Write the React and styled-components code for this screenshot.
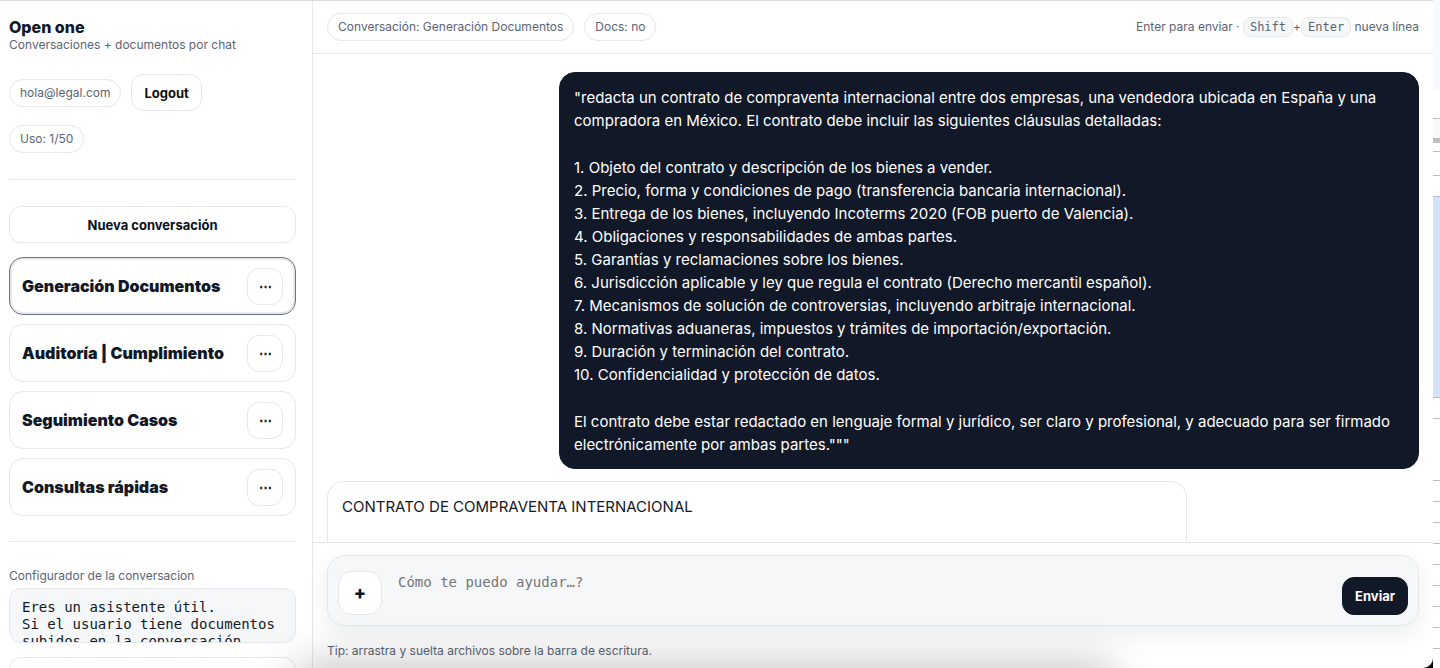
import styled, { createGlobalStyle } from "styled-components";

const GlobalStyle = createGlobalStyle`
    *{
        box-sizing: border-box;
    }
    body{
        margin: 0;
        background-color: #fff;
        color: #111827;
        font-family: Inter, "Liberation Sans", sans-serif;
        font-size: 16px;
    }
    button, textarea{
        color: inherit;
        font-size: 14px;
    }
`

const Screen = styled.div`
    height: 100vh;
    display: flex;
    position: relative;
    overflow: hidden;
    background-color: #000;
`

const Layout = styled.div`
    flex: 1;
    min-width: 0;
    display: grid;
    grid-template-columns: 313px minmax(0, 1fr);
    border-top: 1px solid #dcdcdc;
    border-bottom-right-radius: 10px;
    background-color: #fff;
`

const Sidebar = styled.aside`
    display: flex;
    flex-direction: column;
    min-height: 0;
    overflow: hidden;
    padding: 16px 16px 0 9px;
    border-right: 1px solid #e5e7eb;

    > *{
        flex-shrink: 0;
    }
`

const Brand = styled.h1`
    margin: 0;
    font-size: 16px;
    line-height: 20px;
    font-weight: 800;
`

const Muted = styled.div`
    color: #5b6475;
    font-size: 12px;
    line-height: 16px;
`

const Account = styled.div`
    display: flex;
    flex-wrap: wrap;
    align-items: center;
    gap: 14px 10px;
    margin: 21px 60px 26px 0;
`

const Pill = styled.span`
    height: 28px;
    padding: 0 10px;
    border: 1px solid #e5e7eb;
    border-radius: 14px;
    color: #5b6475;
    font-size: 12px;
    line-height: 26px;
    white-space: nowrap;
`

const Button = styled.button`
    height: 38px;
    padding: 0 12px;
    border: 1px solid ${(props) => props.$dark ? "#111827" : "#e5e7eb"};
    border-radius: 12px;
    background-color: ${(props) => props.$dark ? "#111827" : "#fff"};
    color: ${(props) => props.$dark ? "#fff" : "#0b1020"};
    font-family: Inter, "Liberation Sans", sans-serif;
    font-size: 13px;
    line-height: 16px;
    font-weight: 700;
`

const SideButton = styled(Button)`
    height: 37px;
`

const Divider = styled.hr`
    width: 100%;
    height: 1px;
    margin: 0 0 26px;
    border: 0;
    background-color: #e5e7eb;
`

const Chats = styled.ul`
    display: flex;
    flex-direction: column;
    gap: 9px;
    margin: 14px 0 25px;
    padding: 0;
    list-style: none;
`

const Chat = styled.li`
    display: flex;
    align-items: center;
    justify-content: space-between;
    height: 58px;
    padding: 0 12px;
    border: 1px solid ${(props) => props.$active ? "#6b7280" : "#e5e7eb"};
    border-radius: 14px;
    box-shadow: ${(props) => props.$active ? "inset 0 0 0 2px #e7e8ea" : "none"};
    font-weight: 900;
`

const MenuButton = styled(SideButton)`
    width: 36px;
    padding: 0;
`

const Label = styled.label`
    margin-bottom: 4px;
    color: #5b6475;
    font-size: 12px;
    line-height: 16px;
`

const Instructions = styled.textarea`
    display: block;
    width: 100%;
    height: 55px;
    padding: 10px 12px;
    border: 1px solid #e5e7eb;
    border-radius: 12px;
    background-color: #f5f7f9;
    font-family: "DejaVu Sans Mono", monospace;
    line-height: 17px;
    overflow: hidden;
    resize: none;
`

const SaveButton = styled(Button)`
    margin-top: 14px;
`

const Main = styled.main`
    display: flex;
    flex-direction: column;
    min-width: 0;
    min-height: 0;
`

const Topbar = styled.header`
    display: flex;
    align-items: center;
    gap: 10px;
    height: 53px;
    padding: 0 14px;
    border-bottom: 1px solid #e5e7eb;
`

const Hint = styled(Muted)`
    margin-left: auto;
`

const Kbd = styled.kbd`
    display: inline-block;
    padding: 0 6px;
    border: 1px solid #e5e7eb;
    border-radius: 8px;
    background-color: #f5f7f9;
    font-family: "DejaVu Sans Mono", monospace;
    font-size: 12px;
    line-height: 18px;
`

const Messages = styled.section`
    flex: 1;
    min-height: 0;
    display: flex;
    flex-direction: column;
    gap: 12px;
    padding: 18px 14px 0;
    overflow: hidden;
`

const Bubble = styled.article`
    flex-shrink: 0;
    align-self: ${(props) => props.$mine ? "flex-end" : "flex-start"};
    width: 860px;
    max-width: 92%;
    min-height: 120px;
    padding: 13px 14px 12px;
    border: 1px solid ${(props) => props.$mine ? "#111827" : "#e5e7eb"};
    border-radius: 16px;
    background-color: ${(props) => props.$mine ? "#111827" : "#fff"};
    color: ${(props) => props.$mine ? "#fff" : "#111827"};
    font-size: 15px;
    line-height: 23px;
`

const Text = styled.p`
    margin: 0 0 24px;

    &:last-child{
        margin-bottom: 0;
    }
`

const Clauses = styled.ol`
    margin: 0 0 24px;
    padding: 0;
    list-style: none;
`

const Footer = styled.footer`
    padding: 12px 14px 9px;
    border-top: 1px solid #e5e7eb;
`

const Composer = styled.form`
    display: flex;
    align-items: flex-end;
    gap: 10px;
    height: 71px;
    margin-bottom: 17px;
    padding: 10px;
    border: 1px solid #e5e7eb;
    border-radius: 18px;
    background-color: #f5f7f9;
    box-shadow: 0 8px 24px rgba(17, 24, 39, 0.08);
`

const AddButton = styled(Button)`
    width: 44px;
    height: 44px;
    padding: 0;
    border-radius: 14px;
    font-size: 18px;
    font-weight: 800;
`

const Prompt = styled.textarea`
    flex: 1;
    height: 44px;
    padding: 3px 6px;
    border: 0;
    background: none;
    font-family: "DejaVu Sans Mono", monospace;
    line-height: 17px;
    resize: none;

    &::placeholder{
        color: #757575;
    }
`

const Strip = styled.div`
    width: 7px;
    flex-shrink: 0;
    background-color: #fff;
`

const Cell = styled.div`
    height: ${(props) => props.$height}px;
    border-bottom: ${(props) => props.$line}px solid #bfbfbf;
    background-color: ${(props) => props.$color};
`

const Shade = styled.div`
    position: absolute;
    left: 310px;
    right: 340px;
    bottom: -38px;
    height: 30px;
    box-shadow: 0 0 44px 12px rgba(0, 0, 0, 0.24);
    pointer-events: none;
`

const chats = ["Generación Documentos", "Auditoría | Cumplimiento", "Seguimiento Casos", "Consultas rápidas"]

const clauses = [
    "Objeto del contrato y descripción de los bienes a vender.",
    "Precio, forma y condiciones de pago (transferencia bancaria internacional).",
    "Entrega de los bienes, incluyendo Incoterms 2020 (FOB puerto de Valencia).",
    "Obligaciones y responsabilidades de ambas partes.",
    "Garantías y reclamaciones sobre los bienes.",
    "Jurisdicción aplicable y ley que regula el contrato (Derecho mercantil español).",
    "Mecanismos de solución de controversias, incluyendo arbitraje internacional.",
    "Normativas aduaneras, impuestos y trámites de importación/exportación.",
    "Duración y terminación del contrato.",
    "Confidencialidad y protección de datos."
]

// edge of the spreadsheet window behind the chat
const cells = [
    { height: 90, line: 0, color: "#f8f9ff" },
    { height: 29, line: 1, color: "#fff" },
    { height: 24, line: 5, color: "#f8f9fb" },
    { height: 9, line: 1, color: "#fff" },
    { height: 24, line: 1, color: "#fff" },
    { height: 21, line: 1, color: "#fff" },
    { height: 201, line: 1, color: "#d3e3fd" },
    { height: 21, line: 1, color: "#fff" },
    { height: 62, line: 1, color: "#fff" },
    ...Array.from({ length: 8 }, () => ({ height: 21, line: 1, color: "#fff" }))
]

export default function App(){
    return(
        <Screen>
            <GlobalStyle />
            <Layout>
                <Sidebar>
                    <Brand>Open one</Brand>
                    <Muted>Conversaciones + documentos por chat</Muted>
                    <Account>
                        <Pill>hola@legal.com</Pill>
                        <SideButton type="button">Logout</SideButton>
                        <Pill>Uso: 1/50</Pill>
                    </Account>
                    <Divider />
                    <SideButton type="button">Nueva conversación</SideButton>
                    <Chats>
                        {chats.map((chat, i) => (
                            <Chat key={chat} $active={i === 0}>
                                <span>{chat}</span>
                                <MenuButton type="button" aria-label={"Opciones de " + chat}>⋯</MenuButton>
                            </Chat>
                        ))}
                    </Chats>
                    <Divider />
                    <Label htmlFor="instructions">Configurador de la conversacion</Label>
                    <Instructions
                        id="instructions"
                        defaultValue={"Eres un asistente útil.\nSi el usuario tiene documentos subidos en la conversación"}
                    />
                    <SaveButton type="button" aria-label="Guardar" />
                </Sidebar>
                <Main>
                    <Topbar>
                        <Pill>Conversación: Generación Documentos</Pill>
                        <Pill>Docs: no</Pill>
                        <Hint>Enter para enviar · <Kbd>Shift</Kbd>+<Kbd>Enter</Kbd> nueva línea</Hint>
                    </Topbar>
                    <Messages>
                        <Bubble $mine>
                            <Text>
                                "redacta un contrato de compraventa internacional entre dos empresas, una vendedora
                                ubicada en España y una compradora en México. El contrato debe incluir las siguientes
                                cláusulas detalladas:
                            </Text>
                            <Clauses>
                                {clauses.map((clause, i) => <li key={clause}>{i + 1}. {clause}</li>)}
                            </Clauses>
                            <Text>
                                El contrato debe estar redactado en lenguaje formal y jurídico, ser claro y profesional,
                                y adecuado para ser firmado electrónicamente por ambas partes."""
                            </Text>
                        </Bubble>
                        <Bubble>
                            <Text>CONTRATO DE COMPRAVENTA INTERNACIONAL</Text>
                        </Bubble>
                    </Messages>
                    <Footer>
                        <Composer>
                            <AddButton type="button" aria-label="Adjuntar archivo">+</AddButton>
                            <Prompt aria-label="Mensaje" placeholder="Cómo te puedo ayudar…?" />
                            <Button type="submit" $dark>Enviar</Button>
                        </Composer>
                        <Muted>Tip: arrastra y suelta archivos sobre la barra de escritura.</Muted>
                    </Footer>
                </Main>
            </Layout>
            <Strip>
                {cells.map((cell, i) => <Cell key={i} $height={cell.height} $line={cell.line} $color={cell.color} />)}
            </Strip>
            <Shade />
        </Screen>
    )
}
